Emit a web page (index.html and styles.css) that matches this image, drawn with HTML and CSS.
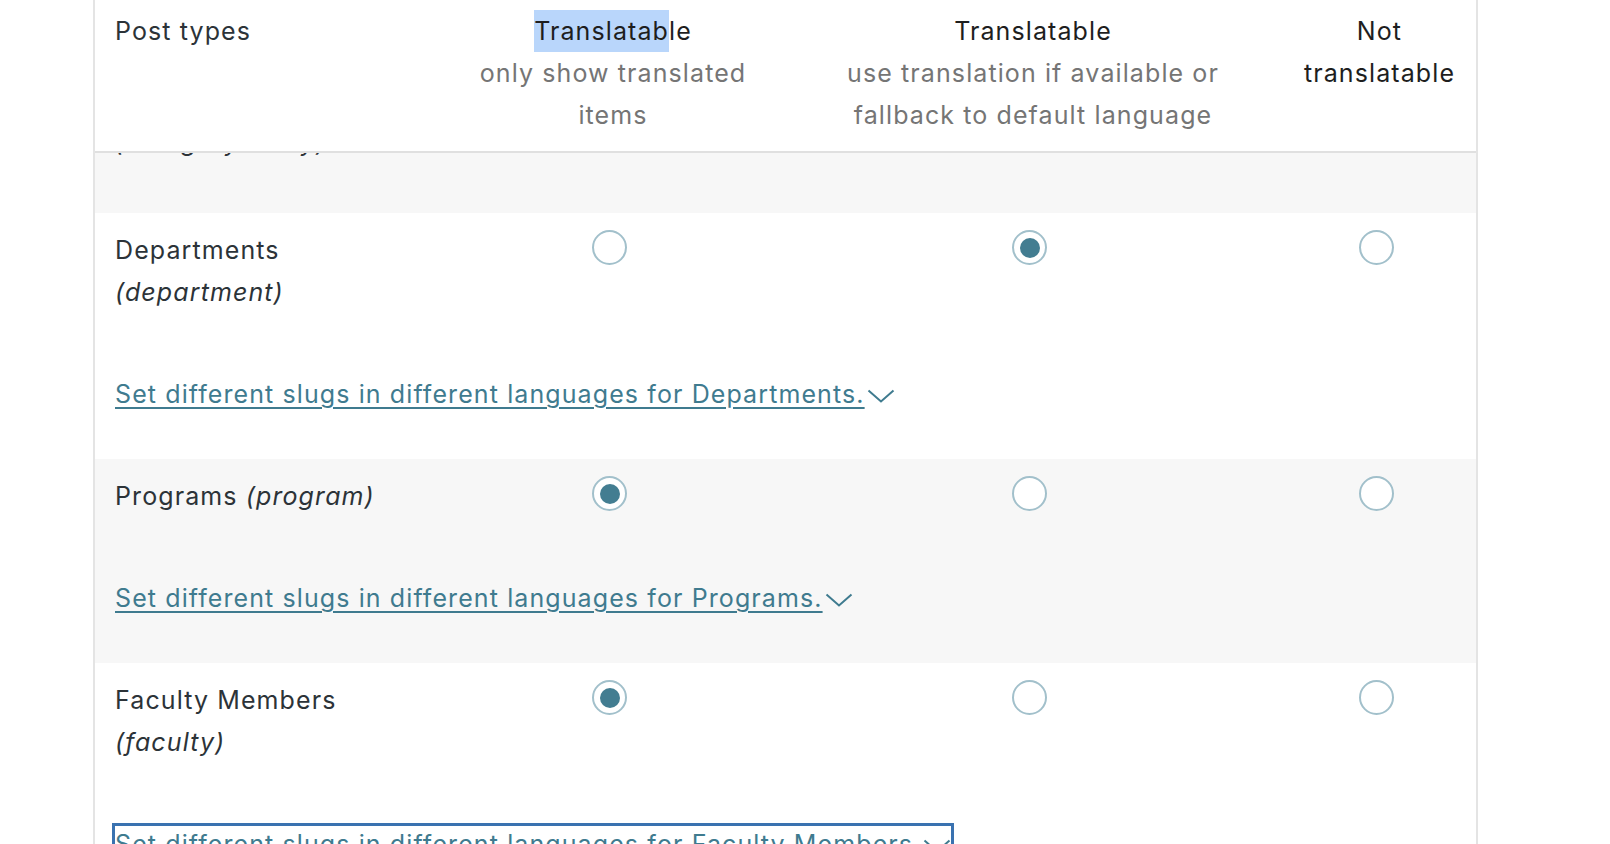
FILE: index.html
```html
<!DOCTYPE html>
<html lang="en">
<head>
<meta charset="utf-8">
<title>Post types</title>
<link rel="stylesheet" href="styles.css">
</head>
<body>
<div class="page">
  <div class="table">
    <div class="thead cols">
      <div class="th th-name">Post types</div>
      <div class="th"><span class="title"><span class="sel">Translatab</span>le</span><span class="sub">only show translated items</span></div>
      <div class="th"><span class="title">Translatable</span><span class="sub">use translation if available or fallback to default language</span></div>
      <div class="th th-not"><span class="title">Not translatable</span></div>
    </div>

    <div class="row alt partial">
      <div class="clip"><em>(category_story)</em></div>
    </div>

    <div class="row">
      <div class="cols">
        <div class="cell name">Departments <em>(department)</em></div>
        <div class="cell choice"><input class="radio" type="radio" name="department"></div>
        <div class="cell choice"><input class="radio" type="radio" name="department" checked></div>
        <div class="cell choice"><input class="radio" type="radio" name="department"></div>
      </div>
      <div class="slug"><a href="#" class="slug-link">Set different slugs in different languages for Departments.<svg class="chev" viewBox="0 0 28 14" width="28" height="14"><polyline points="1.5,1.5 14,12.5 26.5,1.5"/></svg></a></div>
    </div>

    <div class="row alt">
      <div class="cols">
        <div class="cell name">Programs <em>(program)</em></div>
        <div class="cell choice"><input class="radio" type="radio" name="program" checked></div>
        <div class="cell choice"><input class="radio" type="radio" name="program"></div>
        <div class="cell choice"><input class="radio" type="radio" name="program"></div>
      </div>
      <div class="slug"><a href="#" class="slug-link">Set different slugs in different languages for Programs.<svg class="chev" viewBox="0 0 28 14" width="28" height="14"><polyline points="1.5,1.5 14,12.5 26.5,1.5"/></svg></a></div>
    </div>

    <div class="row">
      <div class="cols">
        <div class="cell name">Faculty Members <em>(faculty)</em></div>
        <div class="cell choice"><input class="radio" type="radio" name="faculty" checked></div>
        <div class="cell choice"><input class="radio" type="radio" name="faculty"></div>
        <div class="cell choice"><input class="radio" type="radio" name="faculty"></div>
      </div>
      <div class="slug"><a href="#" class="slug-link focused">Set different slugs in different languages for Faculty Members.<svg class="chev" viewBox="0 0 28 14" width="28" height="14"><polyline points="1.5,1.5 14,12.5 26.5,1.5"/></svg></a></div>
    </div>
  </div>
</div>
</body>
</html>
```

FILE: styles.css
```css
html, body {
  margin: 0;
  padding: 0;
  background: #ffffff;
  overflow: hidden;
  height: 844px;
}

body {
  font-family: Inter, "Noto Sans", "Liberation Sans", sans-serif;
  font-size: 25px;
  line-height: 42px;
  letter-spacing: 1.1px;
  color: #2c3338;
}

.page {
  padding-left: 93px;
}

.table {
  width: 1381px;
  border-left: 2px solid #e4e4e4;
  border-right: 2px solid #e4e4e4;
  min-height: 844px;
}

.cols {
  display: grid;
  grid-template-columns: 348px 340px 500px 193px;
}

.thead {
  padding: 10px 0 15px;
  border-bottom: 2px solid #e0e0e0;
  background: #fff;
}

.th {
  text-align: center;
  padding: 0 16px;
}

.th-name {
  text-align: left;
  padding-left: 20px;
}

.th .title {
  display: block;
  color: #1e1e1e;
}

.th .sub {
  display: block;
  color: #757575;
}

.sel {
  display: inline-block;
  background: #b9d6fb;
}

.row {
  background: #ffffff;
  padding: 16px 0 44px;
}

.row.alt {
  background: #f7f7f7;
}

.row.partial {
  height: 60px;
  padding: 0;
  overflow: hidden;
}

.partial .clip {
  margin-top: -32px;
  padding-left: 20px;
  color: #2c3338;
}

.cell.name {
  padding: 0 30px 0 20px;
}

.cell.choice {
  text-align: center;
}

.radio {
  -webkit-appearance: none;
  appearance: none;
  box-sizing: border-box;
  width: 35px;
  height: 35px;
  margin: 1px 7px 0 0;
  border: 2px solid #a2c0cb;
  border-radius: 50%;
  background: #fff;
  vertical-align: top;
  position: relative;
}

.radio:checked::before {
  content: "";
  position: absolute;
  left: 50%;
  top: 50%;
  width: 20px;
  height: 20px;
  margin: -10px 0 0 -10px;
  border-radius: 50%;
  background: #437d91;
}

.slug {
  margin-top: 60px;
  padding-left: 20px;
}

.slug-link {
  color: #3f7b8f;
  text-decoration: underline;
  text-decoration-thickness: 2px;
  text-underline-offset: 4px;
}

.chev {
  fill: none;
  stroke: #3f7b8f;
  stroke-width: 2;
  margin-left: 2px;
  vertical-align: 0px;
}

.slug-link.focused {
  padding-top: 3px;
  outline: 3px solid #3a72b0;
  outline-offset: 0;
}
```
